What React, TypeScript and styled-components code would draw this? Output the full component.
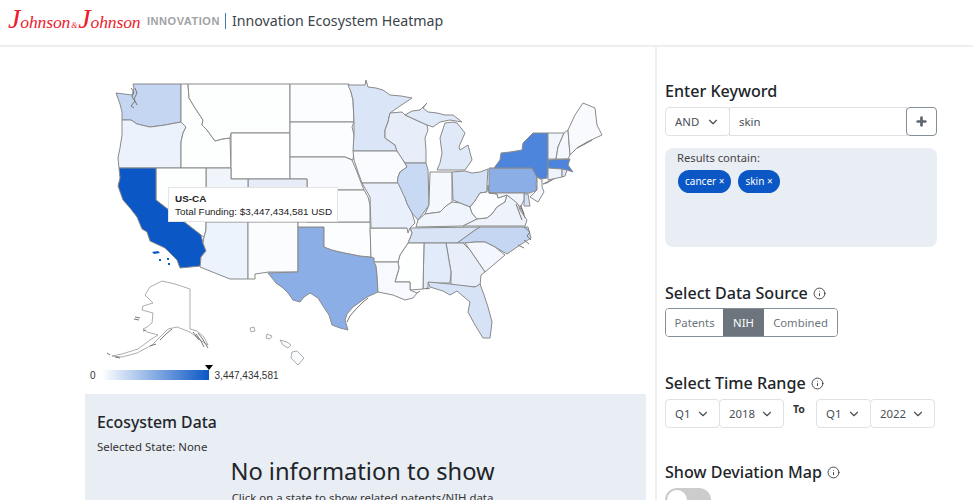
import React from "react";
import styled, { createGlobalStyle } from "styled-components";
import { ChevronDown, Info, Plus } from "lucide-react";

const Global = createGlobalStyle`
  html, body { margin: 0; padding: 0; height: 500px; overflow: hidden; background: #fff; }
  body { font-family: "Noto Sans", "Open Sans", sans-serif; color: #212529; }
  * { box-sizing: border-box; }
`;

const Page = styled.div`
  width: 973px;
  height: 500px;
  overflow: hidden;
  display: flex;
  flex-direction: column;
`;
const Header = styled.header`
  height: 47px;
  flex: none;
  display: flex;
  align-items: center;
  padding: 0 0 4px 8px;
  border-bottom: 2px solid #eeeeee;
`;
const Logo = styled.div`
  width: 133px;
  flex: none;
  display: flex;
  align-items: baseline;
  font-family: "Liberation Serif", serif;
  font-style: italic;
  color: #eb1c2d;
  font-size: 17.6px;
  letter-spacing: -0.15px;
  white-space: nowrap;
`;
const LogoCap = styled.span`
  font-size: 28px;
  line-height: 20px;
`;
const LogoAmp = styled.span`
  font-size: 8px;
  margin: 0 1px;
`;
const Innovation = styled.span`
  margin-left: 6px;
  font-family: "Liberation Sans", sans-serif;
  font-weight: 700;
  font-size: 11px;
  letter-spacing: 0.55px;
  color: #a0a2a5;
`;
const Pipe = styled.span`
  width: 1px;
  height: 16px;
  margin: 0 6px 0 5px;
  background: #3f7ca8;
`;
const Title = styled.h1`
  margin: 0;
  font-weight: 400;
  font-size: 14.2px;
  color: #3c444c;
`;
const Main = styled.main`
  flex: 1;
  display: flex;
  min-height: 0;
`;
const LeftCol = styled.section`
  width: 657px;
  flex: none;
  padding: 22px 9px 0 85px;
  border-right: 2px solid #eeeeee;
`;
const MapWrap = styled.div`
  position: relative;
  width: 562px;
  height: 297px;
`;
const MapSvg = styled.svg`
  display: block;
  width: 562px;
  height: 297px;
`;
const Tooltip = styled.div`
  position: absolute;
  left: 83px;
  top: 118px;
  width: 170px;
  height: 35px;
  padding: 4px 6px;
  background: #fff;
  border: 1px solid #e4e4e4;
  font-family: "Liberation Sans", sans-serif;
  font-size: 9.9px;
  line-height: 13px;
  color: #222;
  white-space: nowrap;
`;
const TipTitle = styled.div`
  font-weight: 700;
`;
const Legend = styled.div`
  height: 18px;
  display: flex;
  align-items: center;
  font-family: "Liberation Sans", sans-serif;
  font-size: 10px;
  color: #333;
  padding-left: 5px;
  position: relative;
`;
const LegendBar = styled.div`
  width: 107px;
  height: 10px;
  margin: 0 6px 0 6px;
  background: linear-gradient(to right, #ffffff, #0b57c5);
  position: relative;
`;
const Marker = styled.div`
  position: absolute;
  right: -4px;
  top: -5px;
  width: 0;
  height: 0;
  border-left: 4px solid transparent;
  border-right: 4px solid transparent;
  border-top: 5px solid #000;
`;
const DataPanel = styled.div`
  margin-top: 10px;
  height: 200px;
  padding: 17px 12px 0;
  background: #e9edf4;
`;
const DataTitle = styled.h3`
  margin: 0;
  font-weight: 500;
  font-size: 15.8px;
  line-height: 22px;
`;
const DataSub = styled.div`
  margin-top: 6px;
  font-size: 11.4px;
  line-height: 16px;
  color: #333;
`;
const NoInfo = styled.div`
  margin-top: -1px;
  padding-right: 6px;
  text-align: center;
  font-size: 23.7px;
  line-height: 34px;
`;
const NoInfoSub = styled.div`
  margin-top: 2px;
  padding-right: 6px;
  text-align: center;
  font-size: 11.4px;
  line-height: 16px;
  color: #333;
`;
const RightCol = styled.aside`
  flex: 1;
  padding: 32px 36px 0 8px;
  display: flex;
  flex-direction: column;
  & > * {
    flex: none;
  }
`;
const Heading = styled.h4`
  margin: 0;
  display: flex;
  align-items: center;
  gap: 5px;
  font-weight: 500;
  font-size: 16.1px;
  line-height: 24px;
  color: #212529;
`;
const InputGroup = styled.div`
  display: flex;
  height: 29px;
  margin-top: 4px;
`;
const SelectBox = styled.div<{ $w: number }>`
  width: ${(p) => p.$w}px;
  height: 29px;
  flex: none;
  display: flex;
  align-items: center;
  justify-content: space-between;
  padding: 0 9px;
  margin-right: -1px;
  background: #fff;
  border: 1px solid #dee2e6;
  border-radius: 4px;
  font-size: 11.4px;
  color: #495057;
`;
const Keyword = styled.div`
  flex: 1;
  display: flex;
  align-items: center;
  padding: 0 9px;
  border: 1px solid #dee2e6;
  font-size: 11.4px;
  color: #495057;
`;
const AddButton = styled.div`
  width: 31px;
  margin-left: -1px;
  display: flex;
  align-items: center;
  justify-content: center;
  border: 1px solid #868e96;
  border-radius: 4px;
  background: #fff;
  color: #5c666f;
`;
const ResultsBox = styled.div`
  margin-top: 12px;
  height: 99px;
  padding: 2px 12px;
  border-radius: 8px;
  background: #e9edf4;
  font-size: 11.2px;
  line-height: 15px;
  color: #444;
`;
const Pills = styled.div`
  display: flex;
  gap: 7px;
  margin-top: 5px;
  margin-left: 1px;
`;
const Pill = styled.span`
  height: 23px;
  padding: 0 7px;
  display: flex;
  align-items: center;
  border-radius: 12px;
  background: #0b57c5;
  color: #fff;
  font-size: 10px;
`;
const Section = styled.div<{ $top: number }>`
  margin-top: ${(p) => p.$top}px;
`;
const ButtonGroup = styled.div`
  display: inline-flex;
  height: 29px;
  margin-top: 3px;
  border: 1px solid #868e96;
  border-radius: 4px;
  overflow: hidden;
`;
const Toggle = styled.div<{ $active?: boolean; $w: number }>`
  width: ${(p) => p.$w}px;
  display: flex;
  align-items: center;
  justify-content: center;
  font-size: 11.3px;
  background: ${(p) => (p.$active ? "#6c757d" : "#fff")};
  color: ${(p) => (p.$active ? "#fff" : "#6c757d")};
`;
const Range = styled.div`
  display: flex;
  margin-top: 4px;
`;
const ToLabel = styled.span`
  width: 33px;
  flex: none;
  padding: 1px 0 0 10px;
  font-size: 10.5px;
  font-weight: 700;
  line-height: 18px;
  color: #333;
`;
const Switch = styled.div`
  width: 46px;
  height: 24px;
  margin-top: 4px;
  padding: 2px;
  border-radius: 12px;
  background: #cccccc;
`;
const Knob = styled.div`
  width: 20px;
  height: 20px;
  border-radius: 50%;
  background: #fff;
`;

type S = [string, string];
const states: S[] = [
  ["#c5d6f3", "133,84 181,84 181,122 165,125 158,126 150,127 137,124 131,120 122,120 122,112 120,104 116,93 124,94 132,95 134,88"],
  ["#ecf2fc", "122,120 131,120 137,124 150,127 158,126 165,125 181,122 186,127 183,133 181,142 181,168 119,168 118,158 120,148 122,135"],
  ["#fdfefe", "181,84 188,84 189,98 195,108 203,120 202,125 207,130 215,141 222,139 230,138 231,168 181,168 181,142 183,133 186,127 181,122"],
  ["#fdfefe", "188,84 290,84 290,133 231,133 230,138 222,139 215,141 207,130 202,125 203,120 195,108 189,98"],
  ["#ffffff", "231,133 290,133 290,179 231,179"],
  ["#fcfdfe", "290,84 349,84 351,92 353,100 354,122 290,122"],
  ["#fcfdfe", "290,122 354,122 352,127 354,135 354,151 353,160 345,157 338,157 290,157"],
  ["#f8fafd", "290,157 338,157 345,157 352,160 357,172 360,180 364,190 307,190 307,179 290,179"],
  ["#e6edf9", "248,179 307,179 307,222 248,222"],
  ["#f0f5fc", "206,168 231,168 231,179 248,179 248,222 206,222"],
  ["#fdfefe", "156,168 206,168 206,230 204,237 201,235 156,200"],
  ["#0b57c5", "119,168 156,168 156,200 201,235 203,243 206,251 201,257 201,266 180,268 177,260 170,253 165,248 150,241 147,232 142,229 137,217 130,208 123,200 118,186 120,178"],
  ["#edf3fc", "206,222 248,222 248,279 230,279 200,267 201,257 206,251 203,243 204,237 206,230"],
  ["#fbfcfe", "248,222 298,222 298,272 269,272 255,274 255,279 248,279"],
  ["#8baee6", "298,227 324,227 324,247 332,250 340,252 350,254 360,256 371,257 374,258 376,266 377,275 378,292 367,297 360,302 353,307 347,314 345,320 348,330 340,328 332,325 329,315 323,306 318,298 310,293 304,297 300,302 293,300 288,293 283,288 276,283 268,273 298,272"],
  ["#fcfdfe", "298,222 370,222 371,257 360,256 350,254 340,252 332,250 324,247 324,227 298,227"],
  ["#fbfcfe", "307,190 364,190 368,197 370,205 370,222 307,222"],
  ["#dae5f7", "348,85 365,85 366,80 368,87 376,88 383,90 390,95 401,96 412,98 400,106 390,113 388,122 385,130 385,138 395,145 397,151 353,151 354,135 354,122 353,100 351,92"],
  ["#f9fbfe", "353,151 397,151 402,158 407,167 400,172 398,177 398,183 362,183 358,172 354,160"],
  ["#e7eefa", "385,130 388,122 390,113 402,112 405,115 416,120 427,125 428,130 425,138 426,150 426,163 405,163 397,151 395,145 385,138"],
  ["#dfe9f8", "405,115 412,111 420,110 427,103 423,108 428,112 437,113 445,115 453,115 462,122 450,120 440,122 433,127 427,125 416,120"],
  ["#dfe9f8", "445,123 453,122 457,123 465,133 461,142 459,147 460,150 468,145 472,160 465,170 437,170 440,163 442,153 440,138"],
  ["#c8d9f4", "405,163 426,163 428,170 429,205 424,212 418,220 412,213 407,204 405,198 397,187 398,177 400,172 407,167"],
  ["#f5f8fd", "430,172 452,172 452,202 446,206 440,212 425,214 429,205"],
  ["#d5e2f6", "452,172 465,171 472,173 480,172 488,169 487,185 487,192 480,193 475,201 470,207 460,203 453,200"],
  ["#f0f4fc", "452,202 460,203 470,207 472,213 477,219 463,226 416,227 418,220 425,214 440,212 446,206"],
  ["#fcfdfe", "488,185 489,193 497,194 498,198 507,195 505,202 497,207 492,214 487,218 477,219 472,213 470,207 475,201 480,193 487,192"],
  ["#edf2fb", "507,195 513,199 518,203 520,210 527,220 525,226 463,226 477,219 487,218 492,214 497,207 505,202"],
  ["#8baee6", "489,168 532,168 537,177 536,184 537,190 530,193 489,193"],
  ["#4d84dc", "494,168 500,160 501,153 510,152 522,150 523,143 533,133 548,133 548,159 548,168 547,178 542,179 537,177 532,168"],
  ["#4d84dc", "543,184 557,177 547,183"],
  ["#f1f5fc", "548,133 564,133 558,147 556,159 548,159"],
  ["#f4f7fd", "564,133 568,130 570,155 568,159 556,159 558,147"],
  ["#f8fafe", "568,130 575,115 583,103 595,108 597,125 602,135 587,142 577,148 570,155"],
  ["#4d84dc", "548,160 570,159 568,165 573,172 567,170 548,168"],
  ["#eef3fc", "548,168 562,169 562,177 548,180"],
  ["#dbe6f8", "562,169 567,170 565,176 562,177"],
  ["#f6f8fd", "537,177 542,180 542,187 544,192 538,202 530,197 537,190"],
  ["#d5e2f6", "528,194 530,206 524,206 524,194"],
  ["#f2f6fc", "489,193 524,193 524,200 521,206 524,214 517,203 507,195 498,198 497,194"],
  ["#c5d6f3", "480,227 528,227 531,238 520,245 507,254 495,247 485,242 475,242 465,243 457,243 475,230"],
  ["#d8e4f6", "410,228 480,227 475,230 457,243 408,243 412,233"],
  ["#f3f6fc", "465,243 475,242 485,242 495,247 505,255 485,272 470,250"],
  ["#e8eefa", "446,243 463,243 470,250 485,272 481,275 480,286 475,287 451,285 451,272"],
  ["#e1ebf9", "424,243 446,243 451,272 450,283 428,283 428,288 423,289"],
  ["#fdfefe", "408,243 424,243 423,289 410,290 410,282 395,282 399,268 398,262 400,255"],
  ["#fcfdfe", "370,228 408,228 410,228 412,233 408,243 400,255 398,262 374,262 374,258 371,257"],
  ["#e9f0fb", "362,183 398,183 405,198 407,204 412,213 415,223 410,228 408,233 407,228 371,228 370,197"],
  ["#f7f9fe", "374,262 398,262 399,268 395,282 410,282 410,290 417,293 413,298 405,300 393,295 378,292 377,275 376,266"],
  ["#d6e3f6", "428,282 450,284 475,287 480,284 484,295 488,307 492,322 490,338 483,338 475,325 468,312 470,302 457,291 450,295 443,291 430,287"],
];
const outlying: S[] = [
  ["#ffffff", "162,281 175,284 190,289 190,329 197,331 204,337 208,345 200,340 190,332 177,327 168,329 160,337 152,345 137,353 122,357 112,356 122,354 138,349 150,340 158,335 147,332 143,329 147,327 152,323 153,313 142,310 143,306 153,303 145,295 150,287"],
  ["#f9fbfe", "292,352 297,351 304,358 298,365 291,358"],
  ["#f9fbfe", "280,340 287,342 291,345 288,348 283,345"],
  ["#f9fbfe", "267,334 272,336 270,339 266,338"],
  ["#f9fbfe", "250,328 254,327 255,331 251,332"],
];
const islands = [
  "152,252 158,251 160,253 154,254",
  "159,259 161,259 161,261 159,261",
  "167,258 169,258 169,260 167,260",
  "168,263 170,263 170,265 168,265",
];
const coast = [
  "M131 88 L134 92 L132 97 L135 101 L131 106 L134 108",
  "M135 88 L137 93 L134 99 L137 105",
  "M198 333 L202 338 L205 343 L208 348 M196 334 L201 341 L204 347 M193 332 L199 340",
  "M172 329 L166 334 L160 340 M156 344 L150 346",
  "M135 317 L140 318 M134 319 L139 320 M143 331 L146 330",
  "M107 353 L110 355 M115 357 L120 358",
  "M520 205 L523 212 L525 218 M516 204 L519 212 L522 220",
  "M524 227 L530 232 L527 236 L531 240 M524 240 L529 244 M518 245 L524 248",
  "M417 293 L420 291 M426 289 L430 288",
  "M347 322 L350 316 L356 309 L362 303 L368 298",
  "M577 148 L585 144 L592 140",
];

const Chevron = () => <ChevronDown size={14} strokeWidth={2} />;
const InfoIcon = () => <Info size={13} strokeWidth={1.5} />;

export default function App() {
  return (
    <Page>
      <Global />
      <Header>
        <Logo>
          <LogoCap>J</LogoCap>ohnson<LogoAmp>&amp;</LogoAmp>
          <LogoCap>J</LogoCap>ohnson
        </Logo>
        <Innovation>INNOVATION</Innovation>
        <Pipe />
        <Title>Innovation Ecosystem Heatmap</Title>
      </Header>
      <Main>
        <LeftCol>
          <MapWrap>
            <MapSvg viewBox="85 69 562 297">
              <g stroke="#8a8a8a" strokeWidth="1" strokeLinejoin="round">
                {states.map(([fill, points], i) => (
                  <polygon key={i} fill={fill} points={points} />
                ))}
              </g>
              <g stroke="#8a8a8a" strokeWidth="0.7" strokeLinejoin="round">
                {outlying.map(([fill, points], i) => (
                  <polygon key={i} fill={fill} points={points} />
                ))}
              </g>
              <g fill="#0b57c5">
                {islands.map((points) => (
                  <polygon key={points} points={points} />
                ))}
              </g>
              <g fill="none" stroke="#777" strokeWidth="1">
                {coast.map((d) => (
                  <path key={d} d={d} />
                ))}
              </g>
            </MapSvg>
            <Tooltip>
              <TipTitle>US-CA</TipTitle>
              <div>Total Funding: $3,447,434,581 USD</div>
            </Tooltip>
          </MapWrap>
          <Legend>
            <span>0</span>
            <LegendBar>
              <Marker />
            </LegendBar>
            <span>3,447,434,581</span>
          </Legend>
          <DataPanel>
            <DataTitle>Ecosystem Data</DataTitle>
            <DataSub>Selected State: None</DataSub>
            <NoInfo>No information to show</NoInfo>
            <NoInfoSub>Click on a state to show related patents/NIH data</NoInfoSub>
          </DataPanel>
        </LeftCol>
        <RightCol>
          <Heading>Enter Keyword</Heading>
          <InputGroup>
            <SelectBox $w={65}>
              AND <Chevron />
            </SelectBox>
            <Keyword>skin</Keyword>
            <AddButton>
              <Plus size={13} strokeWidth={5} />
            </AddButton>
          </InputGroup>
          <ResultsBox>
            Results contain:
            <Pills>
              <Pill>cancer ×</Pill>
              <Pill>skin ×</Pill>
            </Pills>
          </ResultsBox>
          <Section $top={34}>
            <Heading>
              Select Data Source <InfoIcon />
            </Heading>
            <ButtonGroup>
              <Toggle $w={57}>Patents</Toggle>
              <Toggle $w={41} $active>
                NIH
              </Toggle>
              <Toggle $w={73}>Combined</Toggle>
            </ButtonGroup>
          </Section>
          <Section $top={34}>
            <Heading>
              Select Time Range <InfoIcon />
            </Heading>
            <Range>
              <SelectBox $w={55}>
                Q1 <Chevron />
              </SelectBox>
              <SelectBox $w={65}>
                2018 <Chevron />
              </SelectBox>
              <ToLabel>To</ToLabel>
              <SelectBox $w={55}>
                Q1 <Chevron />
              </SelectBox>
              <SelectBox $w={65}>
                2022 <Chevron />
              </SelectBox>
            </Range>
          </Section>
          <Section $top={32}>
            <Heading>
              Show Deviation Map <InfoIcon />
            </Heading>
            <Switch>
              <Knob />
            </Switch>
          </Section>
        </RightCol>
      </Main>
    </Page>
  );
}
